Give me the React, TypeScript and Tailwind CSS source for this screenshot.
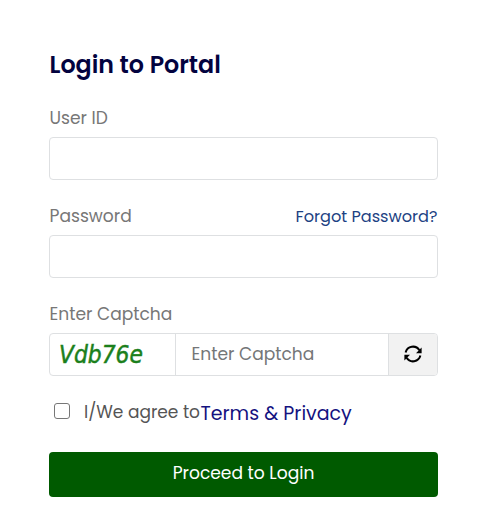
import { useState } from "react";

const label = "pl-[0.5px] text-[17.1px] leading-6 text-[#777777]";
const field =
  "block h-[43px] w-full rounded-[4px] border border-[#dee0e2] bg-white px-4 text-[17px] outline-none";

function RefreshIcon() {
  return (
    <svg viewBox="0 0 20 20" className="size-5" fill="none" stroke="#000" strokeWidth="2">
      <path d="M2.6 8.4A7.6 7.6 0 0 1 16.4 6.2" />
      <path d="M17.4 11.6A7.6 7.6 0 0 1 3.6 13.8" />
      <path d="M18.6 3.6v5.6H13z" fill="#000" stroke="none" />
      <path d="M1.4 16.4v-5.6H7z" fill="#000" stroke="none" />
    </svg>
  );
}

export default function App() {
  const [userId, setUserId] = useState("");
  const [password, setPassword] = useState("");
  const [captcha, setCaptcha] = useState("");
  const [agreed, setAgreed] = useState(false);

  return (
    <main className="h-[514px] w-[480px] bg-white pl-[49px] pt-[47px] font-['Poppins','Inter','Liberation_Sans',sans-serif]">
      <form onSubmit={(e) => e.preventDefault()} className="w-[389px]">
        <h1 className="h-9 whitespace-nowrap pl-[0.5px] text-[23.75px] font-semibold leading-9 text-[#03033f]">
          Login to Portal
        </h1>

        <div className="mt-[23px]">
          <label htmlFor="user" className={`${label} block pb-[7px]`}>
            User ID
          </label>
          <input
            id="user"
            type="text"
            value={userId}
            onChange={(e) => setUserId(e.target.value)}
            className={field}
          />
        </div>

        <div className="mt-6">
          <div className="flex justify-between pb-[7px]">
            <label htmlFor="password" className={label}>
              Password
            </label>
            <a href="#" className="pr-[0.5px] pt-px text-[16.15px] leading-[23px] text-[#1d4283]">
              Forgot Password?
            </a>
          </div>
          <input
            id="password"
            type="password"
            value={password}
            onChange={(e) => setPassword(e.target.value)}
            className={field}
          />
        </div>

        <div className="mt-6">
          <label htmlFor="captcha" className={`${label} block pb-[7px]`}>
            Enter Captcha
          </label>
          <div className="flex h-[43px] overflow-hidden rounded-[4px] border border-[#dee0e2]">
            <div className="w-[126px] shrink-0 border-r border-[#dee0e2] pl-[9px]">
              <span className="inline-block origin-left scale-x-[0.91] font-['DejaVu_Sans',sans-serif] text-[24px] italic leading-[42px] text-[#1b7f1b] [-webkit-text-stroke:0.5px_#1b7f1b]">
                Vdb76e
              </span>
            </div>
            <input
              id="captcha"
              type="text"
              placeholder="Enter Captcha"
              value={captcha}
              onChange={(e) => setCaptcha(e.target.value)}
              className="w-[212px] px-[15.5px] text-[17.1px] outline-none placeholder:text-[#747678]"
            />
            <button
              type="button"
              aria-label="Refresh captcha"
              className="flex flex-1 items-center justify-center border-l border-[#dee0e2] bg-[#f2f2f2] pb-px pr-px"
            >
              <RefreshIcon />
            </button>
          </div>
        </div>

        <div className="mt-6 flex h-6 items-center pl-[5px]">
          <input
            id="agree"
            type="checkbox"
            checked={agreed}
            onChange={(e) => setAgreed(e.target.checked)}
            className="size-4 -translate-y-px appearance-none rounded-[3px] border border-[#777777] checked:bg-[#005a00]"
          />
          <label htmlFor="agree" className="ml-[14px] pt-0.5 text-[17px] text-[#555555]">
            I/We agree to
          </label>
          <a href="#" className="pl-[0.5px] pt-[5px] text-[19px] text-[#14127f]">
            Terms &amp; Privacy
          </a>
        </div>

        <button
          type="submit"
          className="mt-7 h-[45px] w-full rounded-[4px] bg-[#005a00] pb-0.5 text-[17.1px] font-normal text-white"
        >
          Proceed to Login
        </button>
      </form>
    </main>
  );
}
